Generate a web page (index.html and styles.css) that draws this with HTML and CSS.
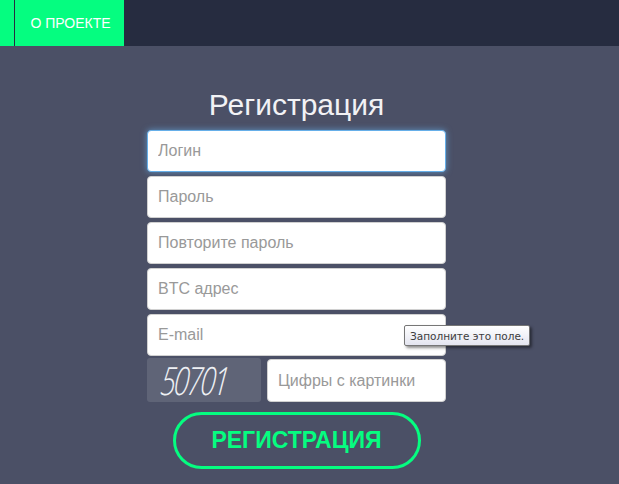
FILE: index.html
```html
<!DOCTYPE html>
<html lang="ru">
<head>
<meta charset="utf-8">
<title>Регистрация</title>
<link rel="stylesheet" href="styles.css">
</head>
<body>
<header class="topbar">
  <div class="nav-stub"></div>
  <a class="nav-item" href="#">О ПРОЕКТЕ</a>
</header>
<main class="page">
  <form class="reg-form">
    <h1 class="title">Регистрация</h1>
    <input class="field field-focus" type="text" placeholder="Логин">
    <input class="field" type="password" placeholder="Пароль">
    <input class="field" type="password" placeholder="Повторите пароль">
    <input class="field" type="text" placeholder="BTC адрес">
    <div class="field-wrap">
      <input class="field" type="email" placeholder="E-mail">
      <div class="tooltip">Заполните это поле.</div>
    </div>
    <div class="captcha-row">
      <div class="captcha"><span class="captcha-text">50701</span></div>
      <input class="field captcha-input" type="text" placeholder="Цифры с картинки">
    </div>
    <button class="submit" type="button">РЕГИСТРАЦИЯ</button>
  </form>
</main>
</body>
</html>
```

FILE: styles.css
```css
* { box-sizing: border-box; }
html, body { margin: 0; height: 100%; }
body {
  background: #4b5066;
  font-family: "Liberation Sans", Arial, sans-serif;
  overflow: hidden;
}
.topbar {
  height: 46px;
  background: #262c40;
  display: flex;
}
.nav-stub {
  width: 14px;
  background: #05fd80;
  margin-right: 1px;
}
.nav-item {
  width: 109px;
  background: #05fd80;
  color: #ffffff;
  font-size: 14px;
  text-decoration: none;
  display: flex;
  align-items: center;
  justify-content: center;
  padding-left: 2px;
}
.page {
  padding-left: 147px;
}
.reg-form {
  width: 299px;
  display: flex;
  flex-direction: column;
  gap: 4px;
}
.title {
  margin: 43px 0 0;
  height: 37px;
  text-align: center;
  color: #f2f2f5;
  font-weight: normal;
  font-size: 30px;
  line-height: 32px;
}
.field {
  width: 100%;
  height: 42px;
  border: 1px solid #d0d0d0;
  border-radius: 4px;
  background: #ffffff;
  padding: 0 10px;
  font-family: "Liberation Sans", Arial, sans-serif;
  font-size: 16px;
  color: #333;
  outline: none;
}
.field::placeholder { color: #999999; }
.field-focus {
  border-color: #66afe9;
  box-shadow: 0 0 6px rgba(102, 175, 233, 0.7);
}
.field-wrap { position: relative; }
.tooltip {
  position: absolute;
  left: 257px;
  top: 11px;
  width: 126px;
  height: 21px;
  border: 1px solid #767676;
  border-radius: 2px;
  background: linear-gradient(#ffffff, #e4e5f0);
  box-shadow: 2px 2px 3px rgba(0, 0, 0, 0.45);
  font-family: "DejaVu Sans", sans-serif;
  font-size: 10.5px;
  color: #3c3c3c;
  display: flex;
  align-items: center;
  padding-left: 5px;
  white-space: nowrap;
}
.captcha-row {
  display: flex;
  gap: 6px;
  margin-top: -2px;
}
.captcha {
  width: 114px;
  height: 44px;
  background: #5f6477;
  border-radius: 3px;
  display: flex;
  align-items: center;
  padding-left: 14px;
}
.captcha-text {
  font-family: "Open Sans", sans-serif;
  font-weight: 300;
  font-style: italic;
  font-size: 39px;
  line-height: 40px;
  color: #eef0f4;
  letter-spacing: -3px;
  transform: skewX(-6deg) scaleX(0.72);
  transform-origin: left center;
  display: inline-block;
}
.captcha-input {
  flex: 1;
  margin-top: 1px;
  height: 43px;
}
.submit {
  align-self: center;
  margin-top: 6px;
  width: 248px;
  height: 57px;
  border: 3px solid #05fd80;
  border-radius: 29px;
  background: transparent;
  color: #05fd80;
  font-family: "Liberation Sans", Arial, sans-serif;
  font-weight: bold;
  font-size: 23px;
  padding: 0;
}
```
